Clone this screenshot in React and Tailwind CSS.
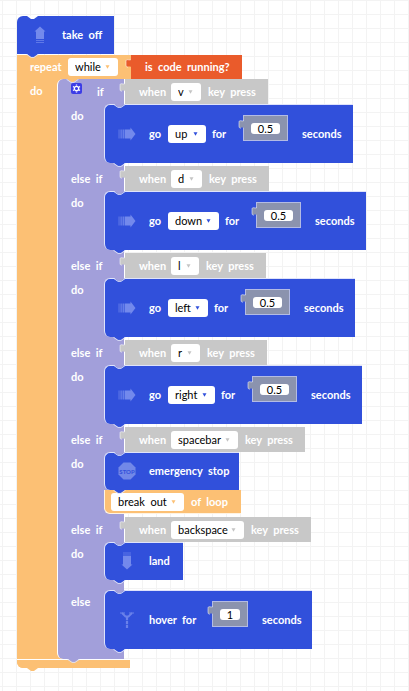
import React from 'react';

const EDGE = '#dfe3fb';

function Notch({ color, className }) {
  return (
    <svg className={`pointer-events-none absolute z-10 ${className}`} width="13" height="5" viewBox="0 0 13 5" aria-hidden="true">
      <path d="M1 0L5 3H8L12 0Z" fill={color} />
      <path d="M0.5 0.3L5 3.4H8L12.5 0.3" fill="none" stroke={EDGE} strokeWidth="0.9" />
    </svg>
  );
}

function Tab({ color, className }) {
  return (
    <svg className={`pointer-events-none absolute z-10 ${className}`} width="13" height="5" viewBox="0 0 13 5" aria-hidden="true">
      <path d="M1 0L5 3H8L12 0Z" fill={color} />
    </svg>
  );
}

function Socket({ color }) {
  return (
    <svg className="absolute top-[3px] right-full" width="6" height="11" viewBox="0 0 6 11" aria-hidden="true">
      <path d="M6 1.5C4 3 1 0 1 3.5V7C1 10.500 4 7.500 6 9Z" fill={color} />
      <path d="M6 1.500C4 3 1 0 1 3.500V7C1 9 2 9.300 3 9" fill="none" stroke="#ffffff" strokeOpacity="0.6" strokeWidth="0.9" />
    </svg>
  );
}

function Dropdown({ label, value, width, arrow = '#c4c4c4' }) {
  return (
    <span className={`relative block h-[18px] shrink-0 ${width}`}>
      <select aria-label={label} defaultValue={value} className="block h-full w-full appearance-none rounded-[3px] bg-white pl-[7px] text-[11px] leading-[16px] font-normal text-black outline-none">
        <option>{value}</option>
      </select>
      <svg className="pointer-events-none absolute top-[7px] right-[8px]" width="5" height="4" viewBox="0 0 5 4" aria-hidden="true">
        <path d="M0.5 0.300H4.500L2.500 3.800Z" fill={arrow} />
      </svg>
    </span>
  );
}

function NumberBlock({ value, width = 'w-[45px]', label }) {
  return (
    <span className={`relative mt-[10px] flex h-[26px] shrink-0 items-center justify-center self-start border border-[#b3bbe4] bg-[#8b93ae] ${width}`}>
      <Socket color="#8b93ae" />
      <input aria-label={label} defaultValue={value} className="mx-[7px] h-[11px] w-full min-w-0 rounded-[3px] bg-white text-center text-[11px] leading-[11px] font-normal text-black outline-none" />
    </span>
  );
}

function ArrowIcon() {
  return (
    <svg width="18" height="14" viewBox="0 0 18 14" fill="#7389ec" aria-hidden="true">
      <path d="M12.500 0.500L17.500 7L12.500 13.500V11.500H7V2.500H12.500Z" />
      <path d="M4.500 2.500H6.500V11.500H4.500Z" opacity="0.8" />
      <path d="M2.300 2.500H4V11.500H2.300Z" opacity="0.65" />
      <path d="M0.300 2.500H1.800V11.500H0.300Z" opacity="0.5" />
    </svg>
  );
}

function TakeOffIcon() {
  return (
    <svg width="12" height="18" viewBox="0 0 12 18" fill="#7389ec" aria-hidden="true">
      <path d="M6 0.500L11.500 5.500H10V13H2V5.500H0.500Z" />
      <path d="M2 14H10V15H2ZM2 16H10V17H2Z" opacity="0.7" />
    </svg>
  );
}

function LandIcon() {
  return (
    <svg width="12" height="18" viewBox="0 0 12 18" fill="#7389ec" aria-hidden="true">
      <path d="M2 0.500H10V1.500H2ZM2 2.500H10V3.500H2Z" opacity="0.7" />
      <path d="M2 4H10V12.500H11.500L6 17.500L0.500 12.500H2Z" />
    </svg>
  );
}

function StopIcon() {
  return (
    <svg width="18" height="18" viewBox="0 0 18 18" aria-hidden="true">
      <path d="M5.500 0.500H12.500L17.500 5.500V12.500L12.500 17.500H5.500L0.500 12.500V5.500Z" fill="#7288e8" />
      <text x="9" y="11.500" textAnchor="middle" fontFamily="Lato, sans-serif" fontSize="6" fontWeight="700" fill="#3150db">STOP</text>
    </svg>
  );
}

function HoverIcon() {
  return (
    <svg width="18" height="18" viewBox="0 0 18 18" fill="none" stroke="#6a81ea" aria-hidden="true">
      <path d="M2 2H7M11 2H16" strokeWidth="1.200" />
      <path d="M4 2L7.500 5.500H10.500L14 2" strokeWidth="1.800" />
      <path d="M9 5V9M9 9.800V13.200M9 14V17" strokeWidth="2.200" />
    </svg>
  );
}

function Statement({ icon, children, height, nested = true }) {
  return (
    <div className={`relative flex w-max items-center bg-[#3150db] pr-[14px] font-bold text-white ${nested ? 'rounded-l-[6px] border-t border-l border-[#dfe3fb] pl-[13px]' : 'rounded-tl-[6px] pl-[14px]'} ${height}`}>
      <span className="mr-[13px] flex w-[18px] shrink-0 justify-center">{icon}</span>
      {children}
    </div>
  );
}

function Header({ label, keyName, width, gear }) {
  return (
    <div className="relative flex h-[25px] items-center font-bold text-white">
      <div className="flex h-full w-[67px] shrink-0 items-center pl-[14px]">
        {gear ? (
          <>
            <button aria-label="Configure conditions" className="mb-[6px] flex h-[11px] w-[11px] items-center justify-center rounded-[2px] bg-[#3c3ce6]">
              <svg width="9" height="9" viewBox="0 0 9 9" fill="none" stroke="#ffffff" aria-hidden="true">
                <circle cx="4.500" cy="4.500" r="2.200" strokeWidth="1.300" />
                <path d="M4.500 0.500V1.500M4.500 7.500V8.500M1 2.500L2 3.100M7 5.900L8 6.500M1 6.500L2 5.900M7 3.100L8 2.500" strokeWidth="1.400" />
              </svg>
            </button>
            <span className="ml-[15px]">if</span>
          </>
        ) : (
          <span className="whitespace-pre">{label}</span>
        )}
      </div>
      <div className="relative flex h-full items-center border-l border-white bg-[#c8c8c8] pr-[14px] pl-[14px]">
        <Socket color="#c8c8c8" />
        <span className="w-[32px]">when</span>
        <Dropdown label="Key" value={keyName} width={width} />
        <span className="ml-[7px] w-[46px] whitespace-pre">key  press</span>
      </div>
      <Notch color="#a29fda" className="top-full left-[56px]" />
    </div>
  );
}

function Branch({ label, children }) {
  return (
    <div className="flex">
      <div className="w-[47px] shrink-0 pt-[4px] pl-[14px] font-bold text-white">{label}</div>
      <div>{children}</div>
    </div>
  );
}

function GoBlock({ direction, width }) {
  return (
    <div className="relative">
      <Statement icon={<ArrowIcon />} height="h-[59px]">
        <span className="w-[19px]">go</span>
        <Dropdown label="Direction" value={direction} width={width} arrow="#3150db" />
        <span className="ml-[6px] w-[31px]">for</span>
        <NumberBlock value="0.5" label="Duration in seconds" />
        <span className="ml-[14px] w-[37px]">seconds</span>
      </Statement>
      <Notch color="#3150db" className="top-full left-[9px]" />
    </div>
  );
}

const moves = [
  { key: 'v', keyWidth: 'w-[30px]', direction: 'up', width: 'w-[38px]' },
  { key: 'd', keyWidth: 'w-[31px]', direction: 'down', width: 'w-[51px]' },
  { key: 'l', keyWidth: 'w-[28px]', direction: 'left', width: 'w-[40px]' },
  { key: 'r', keyWidth: 'w-[29px]', direction: 'right', width: 'w-[47px]' },
];

export default function App() {
  return (
    <main className="min-h-screen w-full bg-white bg-[linear-gradient(to_right,#f3f3f3_1px,transparent_1px),linear-gradient(to_bottom,#f3f3f3_1px,transparent_1px)] bg-[size:14px_14px] bg-[position:2px_0px] pt-[16px] pb-[22px] pl-[17px] font-['Lato','Open_Sans',sans-serif] text-[11px] leading-[16px]">
      <div className="relative">
        <Statement icon={<TakeOffIcon />} height="h-[38px]" nested={false}>
          <span className="w-[38px] whitespace-pre">take  off</span>
        </Statement>
        <Tab color="#ffffff" className="top-0 left-[9px]" />
        <Notch color="#3150db" className="top-full left-[9px]" />
      </div>

      <section className="relative mt-px rounded-bl-[6px] bg-[linear-gradient(to_right,#fcc074_60px,transparent_60px)]">
        <div className="relative flex h-[24px] items-center font-bold text-white">
          <div className="flex h-full w-[114px] shrink-0 items-center bg-[#fcc074] pl-[13px]">
            <span className="w-[38px]">repeat</span>
            <Dropdown label="Loop mode" value="while" width="w-[50px]" arrow="#fcc074" />
          </div>
          <div className="relative flex h-full items-center bg-[#ea5b2b] pr-[14px] pl-[14px]">
            <Socket color="#ea5b2b" />
            <span className="w-[83px] whitespace-pre">is  code  running?</span>
          </div>
          <Notch color="#fcc074" className="top-full left-[49px]" />
        </div>

        <div className="flex">
          <div className="w-[40px] shrink-0 pt-[4px] pl-[13px] font-bold text-white">do</div>
          <div className="relative rounded-l-[6px] border-l border-white bg-[linear-gradient(to_right,#a29fda_66px,transparent_66px)]">
            {moves.map((m, i) => (
              <div key={m.key} className="-ml-px pb-[3px]">
                <Header gear={i === 0} label="else  if" keyName={m.key} width={m.keyWidth} />
                <Branch label="do"><GoBlock direction={m.direction} width={m.width} /></Branch>
              </div>
            ))}

            <div className="-ml-px pb-[3px]">
              <Header label="else  if" keyName="spacebar" width="w-[67px]" />
              <Branch label="do">
                <div className="relative">
                  <Statement icon={<StopIcon />} height="h-[38px] pb-[2px]">
                    <span className="w-[76px] whitespace-pre">emergency  stop</span>
                  </Statement>
                  <Notch color="#3150db" className="top-full left-[9px]" />
                </div>
                <div className="flex h-[24px] w-max items-center rounded-bl-[6px] border-b border-l border-[#fff3e2] bg-[#fcc074] pr-[13px] pl-[6px] font-bold text-white">
                  <Dropdown label="Loop action" value={'break\u00a0\u00a0out'} width="w-[73px]" arrow="#fcc074" />
                  <span className="ml-[7px] w-[37px] whitespace-pre">of  loop</span>
                </div>
              </Branch>
            </div>

            <div className="-ml-px pb-[10px]">
              <Header label="else  if" keyName="backspace" width="w-[73px]" />
              <Branch label="do">
                <div className="relative">
                  <Statement icon={<LandIcon />} height="h-[38px] pb-[2px]">
                    <span className="w-[20px]">land</span>
                  </Statement>
                  <Notch color="#3150db" className="top-full left-[9px]" />
                </div>
              </Branch>
            </div>

            <div className="relative -ml-px pb-[10px]">
              <Branch label="else">
                <div className="relative">
                  <Notch color="#a29fda" className="top-0 left-[9px]" />
                  <Statement icon={<HoverIcon />} height="h-[59px]">
                    <span className="w-[63px] whitespace-pre">hover  for</span>
                    <NumberBlock value="1" width="w-[36px]" label="Hover duration in seconds" />
                    <span className="ml-[14px] w-[36px]">seconds</span>
                  </Statement>
                  <Notch color="#3150db" className="top-full left-[9px]" />
                </div>
              </Branch>
            </div>
            <Notch color="#a29fda" className="top-full left-[9px]" />
          </div>
        </div>
        <div className="relative h-[9px] w-[113px] rounded-bl-[6px] border-t border-white bg-[#fcc074]">
          <Tab color="#fcc074" className="top-full left-[9px]" />
        </div>
      </section>
    </main>
  );
}
